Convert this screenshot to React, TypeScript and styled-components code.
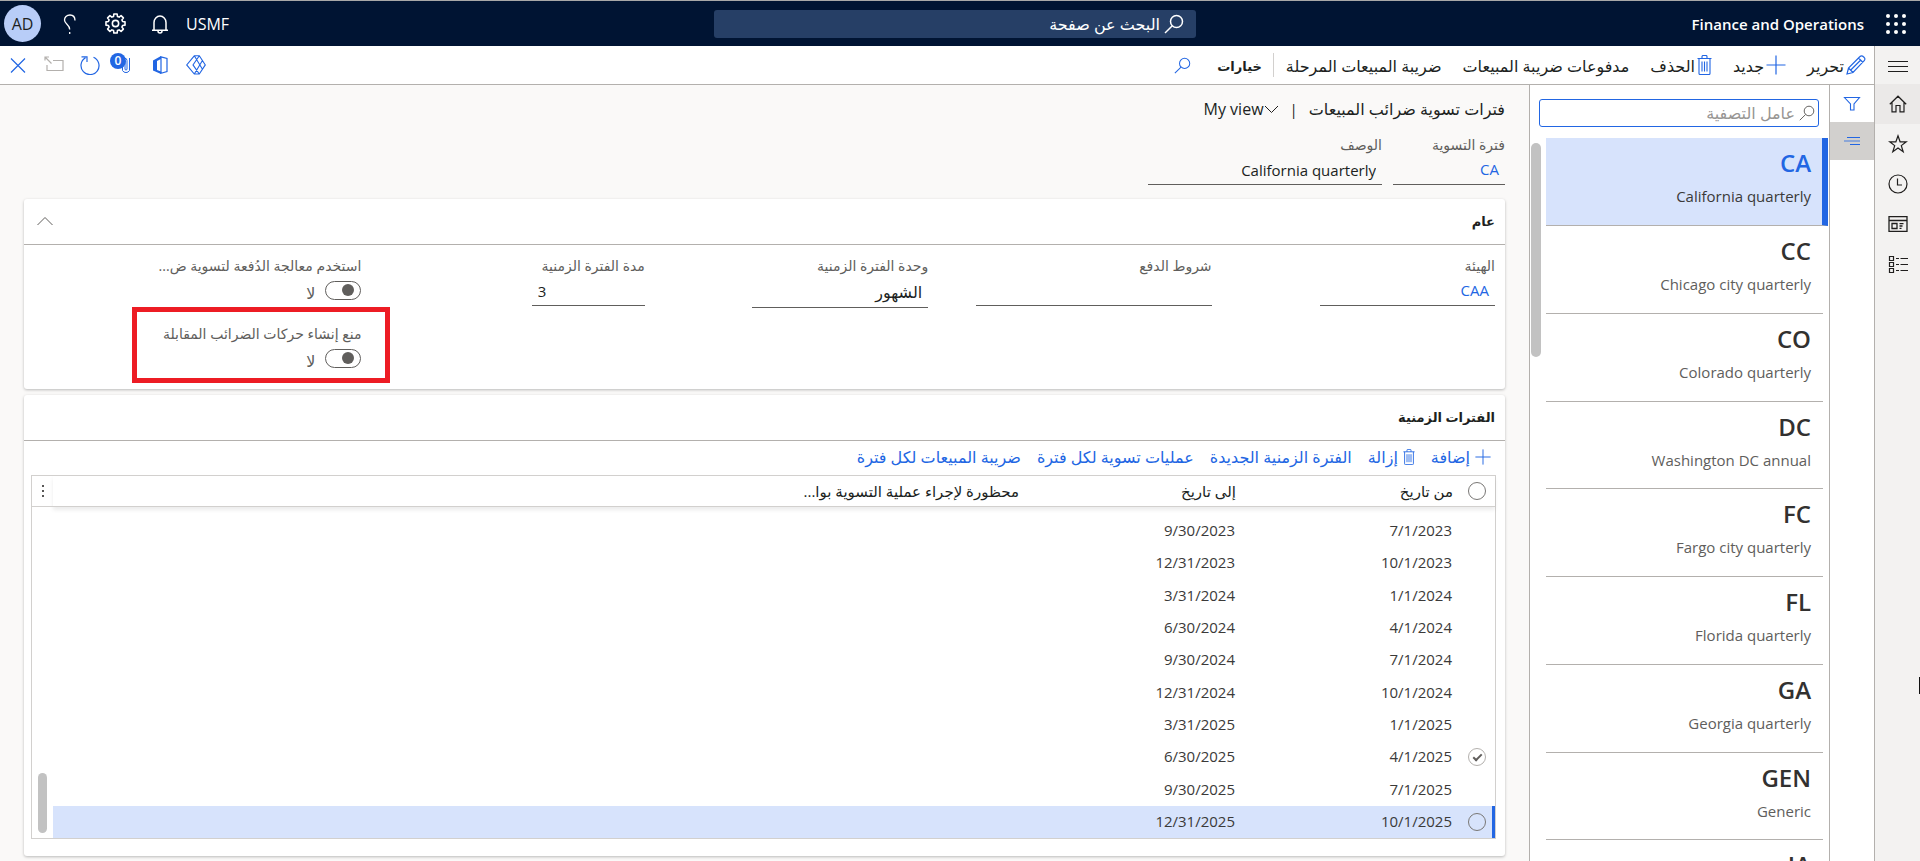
import React from "react";
import styled, { createGlobalStyle, css } from "styled-components";

const color = {
  navy: "#001433",
  accent: "#2266e3",
  selected: "#d7e3fc",
  text: "#201f1e",
  muted: "#605e5c",
  line: "#b3b0ad",
  gridLine: "#d2d0ce",
  page: "#faf9f8",
  rail: "#f3f2f1",
  thumb: "#c2c2c2",
};

const fonts = `"Open Sans", "Noto Sans", "DejaVu Sans", sans-serif`;

const GlobalStyle = createGlobalStyle`
  *, *::before, *::after { box-sizing: border-box; }
  html, body { margin: 0; }
  body {
    overflow: hidden;
    background: ${color.page};
    color: ${color.text};
    font-family: ${fonts};
    font-size: 15px;
    line-height: 24px;
  }
  button, input, select {
    font: inherit;
    color: inherit;
    margin: 0;
  }
  button {
    padding: 0;
    border: 0;
    background: none;
    white-space: nowrap;
  }
  svg { display: block; flex: none; }
  ul { list-style: none; margin: 0; padding: 0; }
`;

const Shell = styled.div`
  display: flex;
  flex-direction: column;
  height: 100vh;
  overflow: hidden;
`;

/* ---------- top bar ---------- */

const TopBar = styled.header`
  display: grid;
  grid-template-columns: 1fr 482px 1fr;
  align-items: center;
  flex: none;
  height: 46px;
  padding: 0 14px 0 4px;
  border-top: 1px solid #a8a8a8;
  background: ${color.navy};
  color: #fff;
`;

const Brand = styled.div`
  display: flex;
  align-items: center;
  gap: 22px;
  font-size: 15px;
  font-weight: 600;
`;

const GlobalSearch = styled.label`
  display: flex;
  align-items: center;
  gap: 4px;
  height: 28px;
  padding: 0 12px;
  border-radius: 3px;
  background: #263f66;
`;

const SearchInput = styled.input<{ $hint: string }>`
  flex: 1;
  min-width: 0;
  padding: 0;
  border: 0;
  outline: 0;
  background: none;
  font-size: 16px;
  &::placeholder { color: ${(p) => p.$hint}; opacity: 1; }
`;

const TopTools = styled.div`
  display: flex;
  flex-direction: row-reverse;
  align-items: center;
  gap: 23px;
`;

const Avatar = styled.button`
  width: 37px;
  height: 37px;
  margin-right: -6px;
  border-radius: 50%;
  background: #b8cdf8;
  color: ${color.text};
  font-size: 16px;
`;

const Company = styled.button`
  margin-left: -8px;
  font-size: 16px;
`;

/* ---------- page frame ---------- */

const Frame = styled.div`
  display: flex;
  flex: 1;
  min-height: 0;
`;

const Rail = styled.nav`
  display: flex;
  flex-direction: column;
  flex: none;
  width: 46px;
  padding-top: 1px;
  border-left: 1px solid ${color.line};
  background: ${color.rail};
  position: relative;
`;

const RailButton = styled.button<{ $on?: boolean }>`
  display: grid;
  place-items: center;
  height: 40px;
  background: ${(p) => (p.$on ? "#ebe9e8" : "transparent")};
  &:first-child { height: 37px; }
`;

const EdgeMark = styled.span`
  position: absolute;
  top: 631px;
  right: 0;
  width: 1px;
  height: 17px;
  background: #111;
`;

const Workspace = styled.div`
  display: flex;
  flex-direction: column;
  flex: 1;
  min-width: 0;
`;

const ActionBar = styled.div`
  display: flex;
  align-items: center;
  flex: none;
  height: 39px;
  padding: 0 8px;
  border-bottom: 1px solid ${color.line};
  background: #fff;
`;

const Command = styled.button<{ $strong?: boolean; $gap?: number }>`
  display: flex;
  align-items: center;
  gap: 2px;
  margin-left: ${(p) => p.$gap ?? 21}px;
  font-size: ${(p) => (p.$strong ? 13 : 16)}px;
  font-weight: ${(p) => (p.$strong ? 700 : 400)};
  span { padding-top: 2px; }
`;

const Divider = styled.span`
  width: 1px;
  height: 24px;
  margin-left: 11px;
  background: ${color.gridLine};
`;

const ActionTools = styled.div`
  display: flex;
  flex-direction: row-reverse;
  align-items: center;
  gap: 16px;
  margin-right: auto;
`;

const AttachButton = styled.button`
  position: relative;
  width: 22px;
  height: 24px;
  margin: 0 2px 0 -6px;
`;

const Badge = styled.span`
  position: absolute;
  top: 0;
  left: 0;
  width: 16px;
  height: 16px;
  border-radius: 50%;
  background: ${color.accent};
  color: #fff;
  font-size: 12px;
  font-weight: 600;
  line-height: 16px;
`;

const Columns = styled.div`
  display: flex;
  flex: 1;
  min-height: 0;
`;

/* ---------- filter strip and record list ---------- */

const FilterStrip = styled.div`
  display: flex;
  flex-direction: column;
  flex: none;
  width: 45px;
  border-left: 1px solid ${color.line};
  background: #fff;
`;

const StripButton = styled.button<{ $on?: boolean }>`
  display: grid;
  place-items: center;
  height: ${(p) => (p.$on ? 38 : 37)}px;
  background: ${(p) => (p.$on ? "#d2d0ce" : "transparent")};
`;

const ListPane = styled.aside`
  flex: none;
  width: 300px;
  border-left: 1px solid ${color.line};
  background: #fff;
  overflow: hidden;
`;

const ListFilter = styled.label`
  display: flex;
  align-items: center;
  gap: 4px;
  height: 28px;
  margin: 14px 10px 11px 9px;
  padding: 0 3px;
  border: 1px solid ${color.accent};
  border-radius: 3px;
`;

const ListScroll = styled.div`
  display: flex;
  align-items: flex-start;
`;

const ListThumb = styled.div`
  flex: none;
  width: 10px;
  height: 214px;
  margin: 5px 5px 0 1px;
  border-radius: 5px;
  background: ${color.thumb};
`;

const Records = styled.ul`
  flex: 1;
  padding-right: 1px;
`;

const Record = styled.li<{ $on?: boolean }>`
  height: 88px;
  padding: 10px 12px 0 0;
  margin-right: 5px;
  border-bottom: 1px solid ${color.line};
  font-size: 15px;
  color: ${(p) => (p.$on ? "#3b3a39" : color.muted)};
  &:nth-child(4n) { height: 87px; }
  ${(p) =>
    p.$on &&
    css`
      margin-right: 0;
      border-right: 6px solid ${color.accent};
      padding-right: 11px;
      background: ${color.selected};
    `}
`;

const RecordCode = styled.div<{ $on?: boolean }>`
  margin-bottom: 6px;
  font-size: 24px;
  font-weight: 600;
  line-height: 30px;
  color: ${(p) => (p.$on ? color.accent : "#323130")};
`;

/* ---------- form ---------- */

const Main = styled.main`
  flex: 1;
  min-width: 0;
  padding: 12px 24px 0;
`;

const TitleRow = styled.div`
  display: flex;
  align-items: center;
  gap: 11px;
  height: 24px;
  margin-bottom: 12px;
`;

const PageTitle = styled.h1`
  margin: 0;
  font-size: 16px;
  font-weight: 400;
`;

const ViewButton = styled.button`
  display: flex;
  align-items: center;
  font-size: 16px;
`;

const HeaderFields = styled.div`
  display: flex;
  gap: 11px;
  margin-bottom: 14px;
`;

const Field = styled.div<{ $width: number }>`
  width: ${(p) => p.$width}px;
`;

const Label = styled.label`
  display: block;
  height: 24px;
  font-size: 14px;
  color: ${color.muted};
  white-space: nowrap;
`;

const valueBox = css`
  display: block;
  width: 100%;
  height: 28px;
  padding: 0 6px 2px;
  border: 0;
  border-bottom: 1px solid ${color.muted};
  border-radius: 0;
  outline: 0;
  background: none;
`;

const Value = styled.input`
  ${valueBox}
`;

const Choice = styled.select`
  ${valueBox}
  height: 30px;
  appearance: none;
  font-size: 16px;
`;

const LinkValue = styled.a`
  ${valueBox}
  color: ${color.accent};
  text-decoration: none;
`;

const Card = styled.section`
  margin-bottom: 6px;
  border-radius: 3px;
  background: #fff;
  box-shadow: 0 1px 3px rgba(0, 0, 0, 0.26);
`;

const CardHead = styled.header`
  display: flex;
  align-items: center;
  justify-content: space-between;
  height: 46px;
  padding: 0 10px 2px 13px;
  border-bottom: 1px solid ${color.line};
`;

const CardTitle = styled.h2`
  margin: 0;
  font-size: 13px;
  font-weight: 700;
`;

const FieldGrid = styled.div`
  display: grid;
  grid-template-columns: repeat(5, 1fr);
  padding: 9px 10px 21px 54px;
`;

const ToggleStack = styled.div`
  display: flex;
  flex-direction: column;
  gap: 22px;
`;

const ToggleField = styled.div`
  position: relative;
  display: flex;
  flex-direction: column;
  gap: 2px;
`;

const ToggleLine = styled.div`
  display: flex;
  align-items: center;
  gap: 10px;
  height: 20px;
  color: ${color.muted};
`;

const ToggleState = styled.span`
  padding-top: 6px;
  font-size: 16px;
`;

const Switch = styled.input`
  appearance: none;
  display: flex;
  align-items: center;
  width: 36px;
  height: 19px;
  padding: 0 6px;
  border: 1px solid ${color.muted};
  border-radius: 10px;
  background: #fff;
  &::before {
    content: "";
    width: 12px;
    height: 12px;
    border-radius: 50%;
    background: ${color.muted};
  }
`;

const Highlight = styled.div`
  position: absolute;
  inset: -15px -29px -15px auto;
  width: 258px;
  border: 5px solid #ed1c24;
  pointer-events: none;
`;

/* ---------- periods grid ---------- */

const LineBar = styled.div`
  display: flex;
  align-items: center;
  gap: 16px;
  height: 34px;
  padding: 0 14px 2px 0;
`;

const LineCommand = styled.button`
  display: flex;
  align-items: center;
  gap: 5px;
  color: ${color.accent};
  font-size: 16px;
`;

const PeriodsCard = styled(Card)`
  padding-bottom: 17px;
`;

const GridBox = styled.div`
  display: flex;
  margin: 0 9px 0 7px;
  border: 1px solid ${color.gridLine};
`;

const Table = styled.table`
  flex: 1;
  table-layout: fixed;
  border-collapse: separate;
  border-spacing: 0;
`;

const TableHead = styled.thead`
  box-shadow: 0 3px 4px rgba(0, 0, 0, 0.08);
`;

const HeadCell = styled.th<{ $width?: number }>`
  width: ${(p) => (p.$width ? `${p.$width}px` : "auto")};
  height: 31px;
  padding: 0 6px;
  border-bottom: 1px solid ${color.gridLine};
  font-size: 15px;
  font-weight: 400;
  text-align: right;
  color: #201f1e;
  white-space: nowrap;
`;

const Row = styled.tr<{ $on?: boolean }>`
  height: 32px;
  color: #3b3a39;
  background: ${(p) => (p.$on ? color.selected : "transparent")};
  &:nth-child(3n) { height: 33px; }
  &:first-child td { height: 40px; padding-top: 8px; }
  td:first-child { ${(p) => p.$on && `box-shadow: inset -3px 0 ${color.accent};`} }
`;

const Cell = styled.td`
  padding: 0 7px 2px 0;
`;

const PickCell = styled.td`
  padding: 0 9px 0 0;
`;

const PickHead = styled(HeadCell)`
  padding: 0 9px 0 0;
`;

const Pick = styled.input<{ $faint?: boolean }>`
  appearance: none;
  display: grid;
  place-items: center;
  width: 18px;
  height: 18px;
  border: 1px solid ${(p) => (p.$faint ? "#b3b0ad" : "#797775")};
  border-radius: 50%;
  background: transparent;
  &:checked::before {
    content: "";
    width: 9px;
    height: 5px;
    margin-top: -2px;
    border: solid ${color.muted};
    border-width: 0 0 2px 2px;
    transform: rotate(-45deg);
  }
`;

const GridGutter = styled.div`
  display: flex;
  flex-direction: column;
  flex: none;
  width: 21px;
`;

const GridMenu = styled.button`
  display: grid;
  place-items: center;
  height: 31px;
  border-bottom: 1px solid ${color.gridLine};
`;

const GridThumb = styled.div`
  width: 9px;
  height: 60px;
  margin: auto 6px 5px;
  border-radius: 5px;
  background: ${color.thumb};
`;

/* ---------- icons ---------- */

type IconProps = { size: number; c?: string; w?: number; box?: number; children: React.ReactNode };

const Icon = ({ size, c = color.text, w = 1, box = size, children }: IconProps) => (
  <svg width={size} height={size} viewBox={`0 0 ${box} ${box}`} fill="none" stroke={c} strokeWidth={w} aria-hidden="true">
    {children}
  </svg>
);

const Lens = ({ size, c, w }: { size: number; c: string; w?: number }) => (
  <Icon size={size} box={20} c={c} w={w}>
    <circle cx="12.5" cy="7.5" r="6" />
    <path d="M8.3 11.8 1 19" />
  </Icon>
);

const Plus = ({ size }: { size: number }) => (
  <Icon size={size} box={20} c={color.accent} w={1.2}>
    <path d="M10 .5v19M.5 10h19" />
  </Icon>
);

const Trash = ({ width, height }: { width: number; height: number }) => (
  <svg width={width} height={height} viewBox="0 0 15 20" fill="none" stroke={color.accent} strokeWidth="1.1" aria-hidden="true">
    <path d="M.5 3.500h14M2 3.500v15a1 1 0 0 0 1 1h9a1 1 0 0 0 1-1v-15M5 3.500v-2a1 1 0 0 1 1-1h3a1 1 0 0 1 1 1v2M5 6.500v10M7.500 6.500v10M10 6.500v10" />
  </svg>
);

const gearPath = (() => {
  const teeth = 8;
  const pts: string[] = [];
  for (let i = 0; i < teeth; i++) {
    const a = (i / teeth) * Math.PI * 2;
    [
      [-0.27, 7],
      [-0.17, 9.2],
      [0.17, 9.2],
      [0.27, 7],
    ].forEach(([d, r]) => {
      pts.push(`${(10 + r * Math.sin(a + d)).toFixed(2)} ${(10 - r * Math.cos(a + d)).toFixed(2)}`);
    });
  }
  return `M${pts.join("L")}Z`;
})();

const Waffle = () => (
  <svg width="20" height="20" viewBox="0 0 20 20" fill="#fff" aria-hidden="true">
    {[2, 10, 18].map((y) => [2, 10, 18].map((x) => <circle key={`${x}-${y}`} cx={x} cy={y} r="2" />))}
  </svg>
);

/* ---------- data ---------- */

const records = [
  ["CA", "California quarterly"],
  ["CC", "Chicago city quarterly"],
  ["CO", "Colorado quarterly"],
  ["DC", "Washington DC annual"],
  ["FC", "Fargo city quarterly"],
  ["FL", "Florida quarterly"],
  ["GA", "Georgia quarterly"],
  ["GEN", "Generic"],
  ["IA", ""],
];

const periods: { from: string; to: string; mark?: "checked" | "empty" }[] = [
  { from: "7/1/2023", to: "9/30/2023" },
  { from: "10/1/2023", to: "12/31/2023" },
  { from: "1/1/2024", to: "3/31/2024" },
  { from: "4/1/2024", to: "6/30/2024" },
  { from: "7/1/2024", to: "9/30/2024" },
  { from: "10/1/2024", to: "12/31/2024" },
  { from: "1/1/2025", to: "3/31/2025" },
  { from: "4/1/2025", to: "6/30/2025", mark: "checked" },
  { from: "7/1/2025", to: "9/30/2025" },
  { from: "10/1/2025", to: "12/31/2025", mark: "empty" },
];

/* ---------- sections ---------- */

const TopHeader = () => (
  <TopBar>
    <Brand>
      <button aria-label="مشغل التطبيقات"><Waffle /></button>
      <span dir="ltr">Finance and Operations</span>
    </Brand>
    <GlobalSearch>
      <Lens size={20} c="#fff" w={1.5} />
      <SearchInput $hint="#fff" placeholder="البحث عن صفحة" />
    </GlobalSearch>
    <TopTools>
      <Avatar>AD</Avatar>
      <button aria-label="تعليمات">
        <Icon size={24} c="#fff" w={1.3}>
          <path d="M17 8.500C17 5 15 3 12 3 8.600 3 6.500 5.300 6.500 8c0 4.200 5.200 4.600 5.200 9.500M11.700 20v2" />
        </Icon>
      </button>
      <button aria-label="إعدادات">
        <Icon size={21} box={20} c="#fff" w={1.5}>
          <path d={gearPath} strokeLinejoin="round" />
          <circle cx="10" cy="10" r="3" />
        </Icon>
      </button>
      <button aria-label="إعلامات">
        <Icon size={22} c="#fff" w={1.5}>
          <path d="M3 17.200h16M5 17V9.500a6 6.500 0 0 1 12 0V17" />
          <path d="M9 18a2 2 0 0 0 4 0" />
        </Icon>
      </button>
      <Company>USMF</Company>
    </TopTools>
  </TopBar>
);

const SideRail = () => (
  <Rail>
    <RailButton aria-label="القائمة">
      <Icon size={20}><path d="M0 5.500h20M0 10.500h20M0 15.500h20" /></Icon>
    </RailButton>
    <RailButton $on aria-label="الصفحة الرئيسية">
      <Icon size={18} w={1.2}><path d="M.8 9.300 9 1.200l8.200 8.100M3 7.500v9.300h4v-6.300h4v6.300h4V7.500" /></Icon>
    </RailButton>
    <RailButton aria-label="المفضلة">
      <Icon size={20} w={1.2}><path d="M10 1.800l2.100 6h6.200l-5 3.800 1.900 6.200L10 14l-5.200 3.800 1.900-6.200-5-3.800h6.200z" /></Icon>
    </RailButton>
    <RailButton aria-label="الأخيرة">
      <Icon size={20} w={1.2}><circle cx="10" cy="10" r="9" /><path d="M9.500 4.500v6.500H14" /></Icon>
    </RailButton>
    <RailButton aria-label="مساحات العمل">
      <Icon size={20} w={1.3}>
        <path d="M1 2.600h18v14.800H1zM1 6.500h18M4 9.500h5v5H4zM11.500 9.700h4M11.500 12h3M11.500 14.300h2" />
      </Icon>
    </RailButton>
    <RailButton aria-label="الوحدات النمطية">
      <Icon size={20} w={1.2}>
        <path d="M1.500 2.500h4v4h-4zM1.500 8.500h4v4h-4zM1.500 14.500h4v4h-4zM8 4.500h3M12.500 4.500H20M8 10.500h3M12.500 10.500H20M8 16.500h3M12.500 16.500H20" />
      </Icon>
    </RailButton>
    <EdgeMark />
  </Rail>
);

const Commands = () => (
  <ActionBar>
    <Command>
      <Icon size={20} c={color.accent} w={1.2}>
        <path d="M1 19l1.500-6L14 1.500a2.200 2.200 0 0 1 3.200 0l1 1a2.200 2.200 0 0 1 0 3.200L7 17.500zM2.500 13 7 17.500M12.500 3l4.500 4.500M4.500 15.200 14.800 5" />
      </Icon>
      <span>تحرير</span>
    </Command>
    <Command><Plus size={20} /><span>جديد</span></Command>
    <Command><Trash width={15} height={20} /><span>الحذف</span></Command>
    <Command><span>مدفوعات ضريبة المبيعات</span></Command>
    <Command $gap={12}><span>ضريبة المبيعات المرحلة</span></Command>
    <Divider />
    <Command $strong $gap={26}><span>خيارات</span></Command>
    <button aria-label="بحث"><Lens size={17} c={color.accent} w={1.2} /></button>
    <ActionTools>
      <button aria-label="إغلاق">
        <Icon size={20} c={color.accent} w={1.2}><path d="M3 3.500l14 14M17 3.500l-14 14" /></Icon>
      </button>
      <button aria-label="فتح في نافذة جديدة">
        <Icon size={20} c="#b3b0ad" w={1.2}><path d="M9 5.500h10v10H3V10M1 5.500V2h4M1.500 2.500l6 6" /></Icon>
      </button>
      <button aria-label="تحديث">
        <Icon size={20} c={color.accent} w={1.2}><path d="M13.500 2.300A9 9 0 1 1 5.500 2.800M1.500 1.800H7V7" /></Icon>
      </button>
      <AttachButton aria-label="المرفقات">
        <svg width="22" height="24" viewBox="0 0 22 24" fill="none" stroke={color.accent} aria-hidden="true">
          <path d="M19.500 5v12.500a4 4 0 0 1-7 0V7.500a2.200 2.200 0 0 1 4.500 0V16a1 1 0 0 1-2 0V8" />
        </svg>
        <Badge>0</Badge>
      </AttachButton>
      <button aria-label="فتح في Office">
        <Icon size={20} c={color.accent} w={1.2}>
          <path d="M3 5.500 11 1v3L7 6v9l4 1.500V19l-8-3.500z" fill={color.accent} stroke="none" />
          <path d="M11 1.800l6 1.700v13l-6 1.800z" />
        </Icon>
      </button>
      <button aria-label="Power Apps">
        <Icon size={20} c={color.accent} w={1.1}>
          <path d="M8.300.8h5L19.300 9.900l-6 9.100h-5L.7 9.900zM8.300.8l8 13.200M13.300.8 7 9.900l6.300 9.100M8.300 19l8-13.200" />
        </Icon>
      </button>
    </ActionTools>
  </ActionBar>
);

const RecordList = () => (
  <ListPane>
    <ListFilter>
      <Lens size={16} c={color.muted} w={1.2} />
      <SearchInput $hint="#979593" placeholder="عامل التصفية" />
    </ListFilter>
    <ListScroll>
      <Records>
        {records.map(([code, name], i) => (
          <Record key={code} $on={i === 0}>
            <RecordCode $on={i === 0}>{code}</RecordCode>
            {name}
          </Record>
        ))}
      </Records>
      <ListThumb />
    </ListScroll>
  </ListPane>
);

const GeneralCard = () => (
  <Card>
    <CardHead>
      <CardTitle>عام</CardTitle>
      <button aria-label="طي">
        <Icon size={16} c={color.muted}><path d="M.5 12 8 4.500l7.500 7.500" /></Icon>
      </button>
    </CardHead>
    <FieldGrid>
      <Field $width={175}>
        <Label as="div">الهيئة</Label>
        <LinkValue href="#authority">CAA</LinkValue>
      </Field>
      <Field $width={236}>
        <Label htmlFor="terms">شروط الدفع</Label>
        <Value id="terms" readOnly />
      </Field>
      <Field $width={176}>
        <Label htmlFor="unit">وحدة الفترة الزمنية</Label>
        <Choice id="unit"><option>الشهور</option></Choice>
      </Field>
      <Field $width={113}>
        <Label htmlFor="length">مدة الفترة الزمنية</Label>
        <Value id="length" dir="ltr" readOnly value="3" />
      </Field>
      <ToggleStack>
        <ToggleField>
          <Label htmlFor="batch">استخدم معالجة الدُفعة لتسوية ض...</Label>
          <ToggleLine>
            <Switch id="batch" type="checkbox" role="switch" />
            <ToggleState>لا</ToggleState>
          </ToggleLine>
        </ToggleField>
        <ToggleField>
          <Label htmlFor="offset">منع إنشاء حركات الضرائب المقابلة</Label>
          <ToggleLine>
            <Switch id="offset" type="checkbox" role="switch" />
            <ToggleState>لا</ToggleState>
          </ToggleLine>
          <Highlight />
        </ToggleField>
      </ToggleStack>
    </FieldGrid>
  </Card>
);

const PeriodIntervals = () => (
  <PeriodsCard>
    <CardHead><CardTitle>الفترات الزمنية</CardTitle></CardHead>
    <LineBar>
      <LineCommand><Plus size={16} />إضافة</LineCommand>
      <LineCommand><Trash width={12} height={16} />إزالة</LineCommand>
      <LineCommand>الفترة الزمنية الجديدة</LineCommand>
      <LineCommand>عمليات تسوية لكل فترة</LineCommand>
      <LineCommand>ضريبة المبيعات لكل فترة</LineCommand>
    </LineBar>
    <GridBox>
      <Table>
        <TableHead>
          <tr>
            <PickHead $width={36}>
              <Pick type="checkbox" aria-label="تحديد الكل" />
            </PickHead>
            <HeadCell $width={217}>من تاريخ</HeadCell>
            <HeadCell $width={217}>إلى تاريخ</HeadCell>
            <HeadCell>محظورة لإجراء عملية التسوية بوا...</HeadCell>
          </tr>
        </TableHead>
        <tbody>
          {periods.map((p) => (
            <Row key={p.from} $on={p.mark === "empty"}>
              <PickCell>
                {p.mark && (
                  <Pick
                    type="checkbox"
                    aria-label={p.from}
                    $faint={p.mark === "checked"}
                    defaultChecked={p.mark === "checked"}
                  />
                )}
              </PickCell>
              <Cell>{p.from}</Cell>
              <Cell>{p.to}</Cell>
              <Cell />
            </Row>
          ))}
        </tbody>
      </Table>
      <GridGutter>
        <GridMenu aria-label="خيارات الشبكة">
          <svg width="4" height="14" viewBox="0 0 4 14" fill={color.text} aria-hidden="true">
            <circle cx="2" cy="2" r="1" />
            <circle cx="2" cy="7" r="1" />
            <circle cx="2" cy="12" r="1" />
          </svg>
        </GridMenu>
        <GridThumb />
      </GridGutter>
    </GridBox>
  </PeriodsCard>
);

export default function App() {
  return (
    <Shell dir="rtl" lang="ar">
      <GlobalStyle />
      <TopHeader />
      <Frame>
        <SideRail />
        <Workspace>
          <Commands />
          <Columns>
            <FilterStrip>
              <StripButton aria-label="تصفية">
                <Icon size={18} c={color.accent} w={1.1}><path d="M1.500 2.500h15L11 9v6H7.500V9z" /></Icon>
              </StripButton>
              <StripButton $on aria-label="قائمة">
                <Icon size={18} c={color.accent}>
                  <path d="M4 5.500h13M7 12.500h10" />
                  <path d="M1 9h16" strokeWidth="2" strokeOpacity=".4" />
                </Icon>
              </StripButton>
            </FilterStrip>
            <RecordList />
            <Main>
              <TitleRow>
                <PageTitle>فترات تسوية ضرائب المبيعات</PageTitle>
                <span>|</span>
                <ViewButton>
                  <Icon size={15} c={color.text}><path d="M1 4l6.500 6.500L14 4" /></Icon>
                  My view
                </ViewButton>
              </TitleRow>
              <HeaderFields>
                <Field $width={112}>
                  <Label as="div">فترة التسوية</Label>
                  <LinkValue href="#period">CA</LinkValue>
                </Field>
                <Field $width={234}>
                  <Label htmlFor="description">الوصف</Label>
                  <Value id="description" readOnly value="California quarterly" />
                </Field>
              </HeaderFields>
              <GeneralCard />
              <PeriodIntervals />
            </Main>
          </Columns>
        </Workspace>
      </Frame>
    </Shell>
  );
}
